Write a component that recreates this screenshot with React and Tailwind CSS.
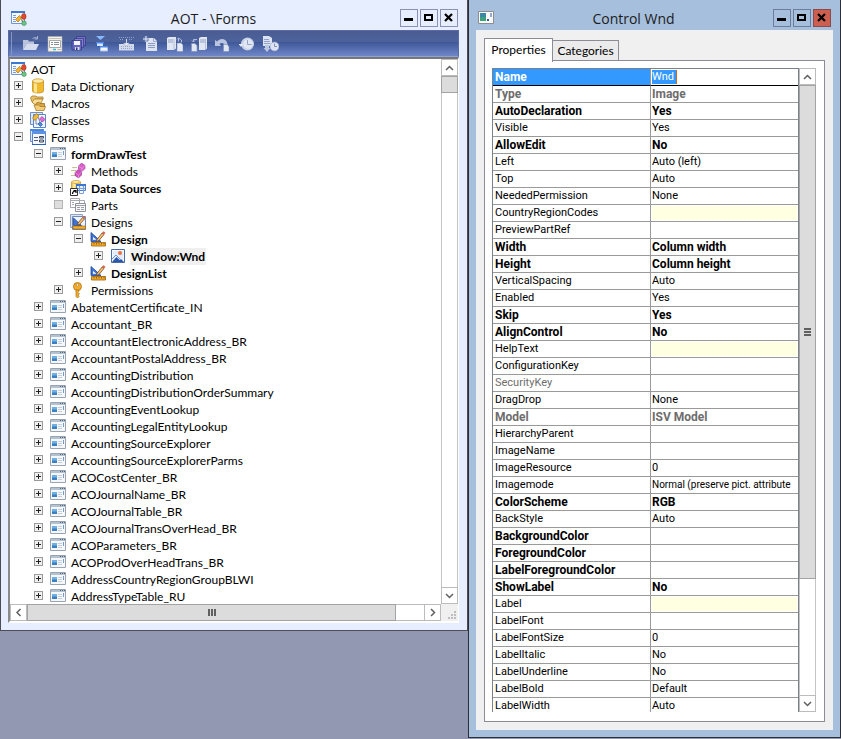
import clsx from 'clsx';

const treeRows = [
  { label: 'Data Dictionary', level: 0, icon: 'database', state: 'closed' },
  { label: 'Macros', level: 0, icon: 'macros', state: 'closed' },
  { label: 'Classes', level: 0, icon: 'classes', state: 'closed' },
  { label: 'Forms', level: 0, icon: 'forms', state: 'open' },
  { label: 'formDrawTest', level: 1, icon: 'form', state: 'open', bold: true },
  { label: 'Methods', level: 2, icon: 'methods', state: 'closed' },
  { label: 'Data Sources', level: 2, icon: 'sources', state: 'closed', bold: true },
  { label: 'Parts', level: 2, icon: 'parts', state: 'empty' },
  { label: 'Designs', level: 2, icon: 'designs', state: 'open' },
  { label: 'Design', level: 3, icon: 'design', state: 'open', bold: true },
  { label: 'Window:Wnd', level: 4, icon: 'image', state: 'closed', bold: true, selected: true },
  { label: 'DesignList', level: 3, icon: 'design', state: 'closed', bold: true },
  { label: 'Permissions', level: 2, icon: 'key', state: 'closed' },
  ...[
    'AbatementCertificate_IN',
    'Accountant_BR',
    'AccountantElectronicAddress_BR',
    'AccountantPostalAddress_BR',
    'AccountingDistribution',
    'AccountingDistributionOrderSummary',
    'AccountingEventLookup',
    'AccountingLegalEntityLookup',
    'AccountingSourceExplorer',
    'AccountingSourceExplorerParms',
    'ACOCostCenter_BR',
    'ACOJournalName_BR',
    'ACOJournalTable_BR',
    'ACOJournalTransOverHead_BR',
    'ACOParameters_BR',
    'ACOProdOverHeadTrans_BR',
    'AddressCountryRegionGroupBLWI',
    'AddressTypeTable_RU',
  ].map((label) => ({ label, level: 1, icon: 'form', state: 'closed' })),
];

const indents = ['pl-0', 'pl-5', 'pl-10', 'pl-15', 'pl-20'];

const properties = [
  { name: 'Type', value: 'Image', bold: true, muted: true },
  { name: 'AutoDeclaration', value: 'Yes', bold: true },
  { name: 'Visible', value: 'Yes' },
  { name: 'AllowEdit', value: 'No', bold: true },
  { name: 'Left', value: 'Auto (left)' },
  { name: 'Top', value: 'Auto' },
  { name: 'NeededPermission', value: 'None' },
  { name: 'CountryRegionCodes', value: '', yellow: true },
  { name: 'PreviewPartRef', value: '' },
  { name: 'Width', value: 'Column width', bold: true },
  { name: 'Height', value: 'Column height', bold: true },
  { name: 'VerticalSpacing', value: 'Auto' },
  { name: 'Enabled', value: 'Yes' },
  { name: 'Skip', value: 'Yes', bold: true },
  { name: 'AlignControl', value: 'No', bold: true },
  { name: 'HelpText', value: '', yellow: true },
  { name: 'ConfigurationKey', value: '' },
  { name: 'SecurityKey', value: '', muted: true },
  { name: 'DragDrop', value: 'None' },
  { name: 'Model', value: 'ISV Model', bold: true, muted: true },
  { name: 'HierarchyParent', value: '' },
  { name: 'ImageName', value: '' },
  { name: 'ImageResource', value: '0' },
  { name: 'Imagemode', value: 'Normal (preserve pict. attribute', long: true },
  { name: 'ColorScheme', value: 'RGB', bold: true },
  { name: 'BackStyle', value: 'Auto' },
  { name: 'BackgroundColor', value: '', bold: true },
  { name: 'ForegroundColor', value: '', bold: true },
  { name: 'LabelForegroundColor', value: '', bold: true },
  { name: 'ShowLabel', value: 'No', bold: true },
  { name: 'Label', value: '', yellow: true },
  { name: 'LabelFont', value: '' },
  { name: 'LabelFontSize', value: '0' },
  { name: 'LabelItalic', value: 'No' },
  { name: 'LabelUnderline', value: 'No' },
  { name: 'LabelBold', value: 'Default' },
  { name: 'LabelWidth', value: 'Auto' },
];

const Svg = ({ children }) => (
  <svg className="h-4 w-4 shrink-0" viewBox="0 0 16 16" fill="none" aria-hidden="true">
    {children}
  </svg>
);

const AotIcon = () => (
  <Svg>
    <path d="M.5 1.500h13v12H.5z" fill="#f4f8ff" stroke="#6f96d2" />
    <path d="M0 1h14v2H0z" fill="#3c78d0" />
    <path d="M2 5.500h3M2 7.500h3M2 9.500h2M2 11.500h3" stroke="#7f9ed0" />
    <path d="M9 7.500h2M10.500 9.500l1.500 3" stroke="#444" />
    <path d="m4.500 9.500 4-4 2 2.500-3.500 4z" fill="#f2b632" stroke="#a8700c" strokeWidth=".7" />
    <ellipse cx="12.800" cy="6.500" rx="2.300" ry="3" fill="#e0492c" stroke="#a02c18" strokeWidth=".5" />
    <circle cx="13" cy="13.200" r="2.300" fill="#6cc684" stroke="#2d7b44" strokeWidth=".5" />
  </Svg>
);

// Set square, pencil and ruler
const DraftingTools = () => (
  <>
    <path d="M1 1.500v9h10z" fill="#3f74d8" stroke="#1f4796" strokeWidth=".8" />
    <path d="M3 6v2.700h3.500z" fill="#fff" />
    <path d="m7 8.500 5-6.500 2 1.500-5 6-2.500 1.200z" fill="#f0c070" stroke="#6c3e14" strokeWidth=".7" />
    <path d="m12 2 1.300-1.700 2.200 1.500L14 3.500z" fill="#d95f48" />
    <path d="M1.500 11.500h14v3.500h-14z" fill="#f5ae2c" stroke="#9c5f08" strokeWidth=".8" />
    <path d="M4 12v1.500M6.500 12v1.500M9 12v1.500M11.500 12v1.500M14 12v1.500" stroke="#7c4a04" strokeWidth=".8" />
  </>
);

const treeIcons = {
  database: (
    <Svg>
      <path d="M2.500 3v10c0 1.300 2.500 2 5.500 2s5.500-.700 5.500-2V3z" fill="#f1b92c" stroke="#bb8414" strokeWidth=".7" />
      <path d="M4 4v10.300c1 .3 2 .4 3 .4V4z" fill="#fde58f" />
      <ellipse cx="8" cy="3" rx="5.500" ry="2.200" fill="#fdeaa6" stroke="#c8921e" strokeWidth=".7" />
    </Svg>
  ),
  macros: (
    <Svg>
      <path d="M.5 3 2 1h4l1 1h6v2H5L4 8 2 7z" fill="#e8c06a" stroke="#a87e2a" strokeWidth=".8" />
      <path d="M2 7l2.500-3H13l-2 4H8L6.500 10 4 9z" fill="#f8dc98" stroke="#a87e2a" strokeWidth=".8" />
      <path d="M6 13V8.500L8.500 7l1.500 1.500h4.500V14z" fill="#d9a440" stroke="#98701e" strokeWidth=".8" />
      <path d="M4 10h4.500L10 11.500h5.500l-1.500 4H6z" fill="#f2cd7c" stroke="#a87e2a" strokeWidth=".8" />
    </Svg>
  ),
  classes: (
    <Svg>
      <path d="M.5.500h12v12H.5z" fill="#dce8fb" stroke="#6c8fca" />
      <path d="M3.500 2.500h12v13h-12z" fill="#eef4ff" stroke="#5e84c4" />
      <path d="M8 5l2 5M6 7v5h2M10 12l2-3" stroke="#5571a5" strokeWidth=".8" />
      <path d="m2.500 6 4-4.500 2.500 2.500-4 4.500z" fill="#f4bb35" stroke="#aa740c" strokeWidth=".7" />
      <path d="m9.500 7 2.500-2.500 3 3L12.500 10z" fill="#e46bd7" stroke="#9b3492" strokeWidth=".7" />
      <path d="m8 12 2-2 2.500 2.500-2 2z" fill="#4d86dd" stroke="#2856a0" strokeWidth=".7" />
    </Svg>
  ),
  forms: (
    <Svg>
      <path d="M.5.500h13v12H.5z" fill="#dfeafb" stroke="#6b92d3" />
      <path d="M0 0h14v2H0z" fill="#4a86de" />
      <path d="M2.500 3.500h13v12h-13z" fill="#f4f8fe" stroke="#5a83c6" />
      <path d="M2 2h14v3H2z" fill="#5c92e2" />
      <path d="M4 8.500h4M4 11.500h4" stroke="#4b5b78" />
      <path d="M9.500 7.500h4v1.500h-4zM9.500 11h4v2h-4z" fill="#dfe7f5" stroke="#3b4658" />
      <path d="M2 15.500h14" stroke="#2f61b4" />
    </Svg>
  ),
  form: (
    <Svg>
      <path d="M.5 1.500h15v12H.5z" fill="#f5f7fa" stroke="#98a4b2" />
      <path d="M1 2h14v2H1z" fill="#b4c1cf" />
      <path d="M10 2.500h1M12 2.500h1M14 2.500h1" stroke="#4f6480" />
      <path d="M2 6h5v5H2z" fill="#6fb0e2" />
      <path d="M2 8.500h5V11H2z" fill="#3a7fc2" />
      <path d="M8 6.500h4M8 8.500h4M8 10.500h4" stroke="#c6ced8" />
      <path d="M13.500 5v4" stroke="#6f9ccd" />
    </Svg>
  ),
  methods: (
    <Svg>
      <path d="M2 4.500h5M1 7.500h5M1 12.500h4" stroke="#c9c48f" />
      <path d="m8.500 3 3-3 3.500 2.500v3L12 8.500 8.500 6z" fill="#db5fcb" stroke="#9c3390" strokeWidth=".6" />
      <path d="m8.500 3 3.500 2.500L15 2.700M12 5.500v3" stroke="#f6bdef" strokeWidth=".5" />
      <path d="m5 9.500 3-3 3.500 2.500v3l-3 3L5 12.500z" fill="#cf52bf" stroke="#8f2c84" strokeWidth=".6" />
      <path d="m5 9.500 3.500 2.500 3-2.800M8.500 12v3" stroke="#f6bdef" strokeWidth=".5" />
    </Svg>
  ),
  sources: (
    <Svg>
      <path d="M1.500 2v8h9V2z" fill="#f4cb58" stroke="#bb8d2a" strokeWidth=".7" />
      <path d="M3 3v6h2.500V3z" fill="#fdeaa6" />
      <ellipse cx="6" cy="2" rx="4.500" ry="1.500" fill="#fdeaa6" stroke="#c8921e" strokeWidth=".7" />
      <path d="M6.500 4.500h9v6h-9z" fill="#e6effc" stroke="#4d7ecb" />
      <path d="M6 4h10v2H6z" fill="#3f75d0" />
      <path d="M9.500 6v7.500h4V6M7 8.500h8" stroke="#7aa0dc" />
      <path d="M.5 8.500h7v7h-7z" fill="#fff" stroke="#333" />
      <path d="M2.500 14c0-2 1-3 3-3M3.500 10.500h2.500v2.500" stroke="#000" strokeWidth="1.200" />
    </Svg>
  ),
  parts: (
    <Svg>
      <path d="M.5 1.500h9v9h-9zM5.500 3.500h9v4" fill="#fff" stroke="#a6a9ae" />
      <path d="M1 3.500h8M2 5.500h2M2 7.500h2" stroke="#a6a9ae" />
      <path d="M5.500 6.500h10v8h-10z" fill="#f8f8f8" stroke="#8e9298" />
      <path d="M6 8.500h9M7 10.500h3M11 10.500h3M7 12.500h3M11 12.500h3" stroke="#9da1a7" />
    </Svg>
  ),
  designs: (
    <Svg>
      <path d="M.5.500h12v13H.5z" fill="#dbe5f4" stroke="#8fa4c4" />
      <path d="M2.500 2.500h13v13h-13z" fill="#eef3fb" stroke="#7189b0" />
      <path d="M3.500 4v7.500h8z" fill="#3f74d8" stroke="#1f4796" strokeWidth=".8" />
      <path d="m8 9 4.500-5.500 2 1.500-5 5.500-2 .5z" fill="#f0c070" stroke="#6c3e14" strokeWidth=".7" />
      <path d="m12.500 3.500 1-1.500 2 1.500-1 1.500z" fill="#d95f48" />
      <path d="M3 12h12.500v3H3z" fill="#f5ae2c" stroke="#9c5f08" strokeWidth=".6" />
    </Svg>
  ),
  design: (
    <Svg>
      <DraftingTools />
    </Svg>
  ),
  image: (
    <Svg>
      <path d="M1.500 1.500h13v13h-13z" fill="#f4f8ff" stroke="#4a6cab" />
      <path d="M3 3h10v10H3z" fill="#e2ecfc" />
      <path d="m2 14 4.500-5 3 3 1.500-1 3 3z" fill="#2c58aa" />
      <path d="m2 11 4-4 5 5" stroke="#6f93d3" />
      <circle cx="10" cy="5" r="2" fill="#ee7038" />
    </Svg>
  ),
  key: (
    <Svg>
      <circle cx="7.500" cy="4.500" r="4" fill="#f3ae2f" stroke="#ac6f0c" strokeWidth=".8" />
      <circle cx="7.500" cy="3" r="1.200" fill="#fff" stroke="#ac6f0c" strokeWidth=".6" />
      <path d="M6 8v6.500L7.500 16 9 14.500 8 13l1.500-1L8 10.500 9 9V8z" fill="#f3ae2f" stroke="#ac6f0c" strokeWidth=".7" />
    </Svg>
  ),
};

const toolbarButtons = [
  {
    label: 'Open',
    icon: (
      <>
        <path d="M0 14V4h5l1 1.500h5V8H3.500z" fill="#b9c3dc" />
        <path d="M3.500 8H16l-3 6H0z" fill="#d5dced" />
        <path d="M9.500 3c1.500-2 3-2 4.500-.5M14.500 0v3h-3" stroke="#aab7d6" />
      </>
    ),
  },
  {
    label: 'Properties',
    icon: (
      <>
        <path d="M1 .5h14v15H1z" fill="#f3f1ea" stroke="#aaa" strokeWidth=".6" />
        <path d="M2 2.500h12" stroke="#c6c3b9" />
        <path d="M2.500 4.500h11v7h-11z" fill="#fff" stroke="#a5a9ae" />
        <path d="M4 6.500h2M4 8.500h2M7 6.500h5M7 8.500h5" stroke="#888e99" />
        <path d="M6 13.500h3" stroke="#2fc3d8" strokeWidth="1.500" />
        <path d="M10.500 13.500H14" stroke="#bcb9b0" />
      </>
    ),
  },
  {
    label: 'Save all',
    icon: (
      <>
        <path d="M5.500.500h9v9h-9z" fill="#7071c6" stroke="#35357e" strokeWidth=".7" />
        <path d="M3.500 2.500h9v9h-9z" fill="#8080d0" stroke="#35357e" strokeWidth=".7" />
        <path d="M1 4.500h9.500V14H1z" fill="#6465c0" stroke="#35357e" strokeWidth=".7" />
        <path d="M3 5h6v4H3z" fill="#f2f3fc" />
        <path d="M4 11h4.500v3H4z" fill="#d9dbf2" />
        <path d="M5 11.500h1.500V14H5z" fill="#333378" />
      </>
    ),
  },
  {
    label: 'Import',
    icon: (
      <>
        <path d="M1 0h9L5.500 4z" fill="#86baff" />
        <path d="M1.500 6.500h7v4h-7z" fill="#d9e6fb" stroke="#2b61bf" />
        <path d="M1 6h8v1.500H1z" fill="#4b88ec" />
        <path d="M5.500 10.500h7v4.500h-7z" fill="#f1f5fd" stroke="#a9c4ee" />
        <path d="M5 10h8v1.500H5z" fill="#4d87e6" />
      </>
    ),
  },
  {
    label: 'Compile',
    icon: (
      <>
        <path d="M0 8h15v6.500H0z" fill="#d2d9eb" />
        <path d="M2 10.500h12M2 12.500h12" stroke="#98a6cb" strokeDasharray="1 1" />
        <path d="M0 1.500h15M1 3.500h4M10 3.500h4" stroke="#8fa0cc" strokeDasharray="1 1" />
        <path d="M7.500 3v4" stroke="#d6deef" />
        <path d="M4.500 7h6l-3 3z" fill="#fff" stroke="#7f90bd" strokeWidth=".6" />
      </>
    ),
  },
  {
    label: 'New',
    icon: (
      <>
        <path d="M3 2h8l3 3v10H3z" fill="#dde3f0" />
        <path d="M10.500 2v3.500H14" stroke="#9dabcd" />
        <path d="M5 7.500h7M5 9.500h7M5 11.500h7" stroke="#8b9ac3" />
        <path d="M3 0v6M0 3h6" stroke="#6478b2" strokeWidth="3" />
        <path d="M3 0v6M0 3h6" stroke="#e6ebf6" />
      </>
    ),
  },
  {
    label: 'Check in',
    icon: (
      <>
        <path d="M0 2 2 1h7v11.500L7 14H0z" fill="#e0e6f2" />
        <path d="M1 4h5M1 6h5" stroke="#93a2c8" />
        <path d="M7 3v11" stroke="#a9b6d5" strokeWidth=".8" />
        <path d="M11.500 5.500V2M10 3.500 11.500 2l3 2v2.500" stroke="#aebbdc" />
        <path d="M10 7h4l2 2v6.500h-6z" fill="#e6ebf5" stroke="#7f90bd" strokeWidth=".6" />
      </>
    ),
  },
  {
    label: 'Check out',
    icon: (
      <>
        <path d="M8 2l2-1h6v11.500L14 14H8z" fill="#e0e6f2" />
        <path d="M9 4h5M9 6h5" stroke="#93a2c8" />
        <path d="M14.500 3v11" stroke="#a9b6d5" strokeWidth=".8" />
        <path d="M6 3.500H2.500V6M1 4.500 2.500 6 4 4.500" stroke="#aebbdc" />
        <path d="M.5 7.500h3.500l2 2v6H.5z" fill="#e0e6f2" stroke="#7f90bd" strokeWidth=".6" />
      </>
    ),
  },
  {
    label: 'Undo',
    icon: (
      <>
        <path d="M0 4v6h6L4.500 8c2-2 4.500-1 5 1l.5 3h3l-.5-4C11.500 2 5 1.500 2 5.500z" fill="#b9c5df" />
        <path d="M8.500 8.500H12l2 2v5H8.500z" fill="#e0e6f2" stroke="#7f90bd" strokeWidth=".6" />
      </>
    ),
  },
  {
    label: 'History',
    icon: (
      <>
        <circle cx="8.500" cy="8" r="6.500" fill="#c8d2e7" />
        <path d="M-.5 8h5L2 11z" fill="#e3e9f4" />
        <circle cx="9" cy="8" r="4.800" fill="#e0e6f2" />
        <path d="M8.500 4v4.500h4" stroke="#93a2c8" />
      </>
    ),
  },
  {
    label: 'Schedule',
    icon: (
      <>
        <path d="M0 0h6l3 2v8H0z" fill="#dde3f0" />
        <path d="M1 3.500h5M1 5.500h6M1 7.500h6" stroke="#93a2c8" />
        <path d="M2 9v3H.5l3.500 4 3.500-4H6V9z" fill="#bcc7e0" />
        <circle cx="11.500" cy="10.500" r="4.500" fill="#dde3f0" stroke="#8f9fc8" strokeWidth=".6" />
        <path d="M11.500 7.500v3H14" stroke="#8092bf" />
      </>
    ),
  },
];

const WindowButtons = ({ redClose }) => (
  <div className="mt-[9px] flex gap-0.5 text-black">
    <button type="button" aria-label="Minimize" className={clsx('flex h-[18px] w-[18px] items-center justify-center border', redClose ? 'border-[#6d7d9a]' : 'border-[#8a91b4]')}>
      <svg className="h-4 w-4" viewBox="0 0 16 16" aria-hidden="true"><path d="M3 8h9v3H3z" fill="currentColor" /></svg>
    </button>
    <button type="button" aria-label="Maximize" className={clsx('flex h-[18px] w-[18px] items-center justify-center border', redClose ? 'border-[#6d7d9a]' : 'border-[#8a91b4]')}>
      <svg className="h-4 w-4" viewBox="0 0 16 16" aria-hidden="true"><path d="M4 5h7v5H4z" fill="none" stroke="currentColor" strokeWidth="2" /></svg>
    </button>
    <button type="button" aria-label="Close" className={clsx('flex h-[18px] w-[18px] items-center justify-center border', redClose ? 'border-[#8c4a4a] bg-[#cd5f50]' : 'border-[#8a91b4]')}>
      <svg className="h-4 w-4" viewBox="0 0 16 16" aria-hidden="true"><path d="m4 4 7 7M11 4l-7 7" fill="none" stroke="currentColor" strokeWidth="2.200" /></svg>
    </button>
  </div>
);

const arrows = {
  up: 'M4 10l3.500-3.500L11 10',
  down: 'M4 6l3.500 3.500L11 6',
  left: 'M9.500 4 6 7.500 9.500 11',
  right: 'M6 4l3.500 3.500L6 11',
};

const ScrollButton = ({ direction }) => (
  <button type="button" aria-label={`Scroll ${direction}`} className="block h-[17px] w-[17px] shrink-0 border border-[#bcbcbc] bg-white">
    <svg className="h-[15px] w-[15px]" viewBox="0 0 15 15" aria-hidden="true">
      <path d={arrows[direction]} fill="none" stroke="#606060" strokeWidth="1.500" />
    </svg>
  </button>
);

const Expander = ({ state, label }) => {
  if (state === 'empty') {
    return <span className="mt-[3px] ml-1 h-[9px] w-[9px] shrink-0 border border-[#b4b4b4] bg-[#dedede]" />;
  }
  return (
    <button type="button" aria-label={`Toggle ${label}`} className="mt-[3px] ml-1 h-[9px] w-[9px] shrink-0 border border-[#9a9a9a] bg-[#f0f0f0]">
      <svg className="h-[7px] w-[7px]" viewBox="0 0 7 7" aria-hidden="true">
        <path d={state === 'open' ? 'M1 3.500h5' : 'M1 3.500h5M3.500 1v5'} stroke="#222" />
      </svg>
    </button>
  );
};

const Tree = () => (
  <ul className="-mb-px min-w-0 overflow-hidden bg-white pt-0.5 font-['Lato',sans-serif] text-xs leading-[17px] whitespace-nowrap text-black">
    <li className="flex h-[17px] pl-px">
      <AotIcon />
      <span className="pl-1">AOT</span>
    </li>
    {treeRows.map((row) => (
      <li key={row.label} className={clsx('flex h-[17px]', indents[row.level])}>
        <span className="flex w-5 shrink-0">
          <Expander state={row.state} label={row.label} />
        </span>
        {treeIcons[row.icon]}
        <span className={clsx('ml-1 px-px', row.bold && 'font-bold', row.selected && 'bg-[#f0f0f0]')}>{row.label}</span>
      </li>
    ))}
  </ul>
);

const AotWindow = () => (
  <section className="min-w-0 flex-1 border-r border-b border-l border-[#4d4d55] bg-[#e6eeff] pr-2 pb-[7px] pl-[7px] font-['Open_Sans',sans-serif]">
    <header className="flex h-[30px] pr-px pl-[3px]">
      <span className="mt-[10px] flex">
        <AotIcon />
      </span>
      <h1 className="flex-1 pt-[9px] text-center text-sm leading-5 text-[#1c1c1c]">AOT - \Forms</h1>
      <WindowButtons />
    </header>
    <div className="flex h-[27px] items-center gap-2 border border-[#5a6ba6] border-b-[#8da0d8] bg-[linear-gradient(#4b5c92,#4d629c_42%,#3f5898_46%,#6f87c8)] pl-0.5">
      <span className="mr-[3px] h-[23px] w-px bg-[#8795c2]" />
      {toolbarButtons.map((button) => (
        <button key={button.label} type="button" aria-label={button.label} className="h-4 w-4">
          <Svg>{button.icon}</Svg>
        </button>
      ))}
    </div>
    <div className="grid grid-cols-[1fr_17px] border-t-2 border-r border-b-2 border-l-2 border-t-[#777] border-r-white border-b-white border-l-[#8a8a8a]">
      <Tree />
      <div className="flex flex-col border-x border-[#c4c4c4] bg-white">
        <div className="-mx-px">
          <ScrollButton direction="up" />
          <div className="h-[17px] border border-[#a3a3a3] bg-[#dcdcdc]" />
        </div>
        <div className="-mx-px mt-auto">
          <ScrollButton direction="down" />
        </div>
      </div>
      <div className="flex border-y border-[#bcbcbc] bg-white">
        <div className="-my-px flex flex-1">
          <ScrollButton direction="left" />
          <div className="flex-1">
            <div className="flex h-[17px] w-[93%] items-center justify-center gap-px border border-[#a3a3a3] bg-[#dcdcdc]">
              <span className="h-[7px] w-0.5 bg-[#606060]" />
              <span className="h-[7px] w-0.5 bg-[#606060]" />
              <span className="h-[7px] w-0.5 bg-[#606060]" />
            </div>
          </div>
          <ScrollButton direction="right" />
        </div>
      </div>
      <div className="bg-[#f0f0f0]">
        <svg className="h-[17px] w-[17px]" viewBox="0 0 17 17" aria-hidden="true">
          <path d="M13 7h2v2h-2zM10 10h2v2h-2zM13 10h2v2h-2zM7 13h2v2H7zM10 13h2v2h-2zM13 13h2v2h-2z" fill="#bdbdbd" />
        </svg>
      </div>
    </div>
  </section>
);

const PropertyTable = () => (
  <table className="w-full table-fixed border-separate border-spacing-0 text-[11px] leading-4 whitespace-nowrap text-black">
    <colgroup>
      <col className="w-[158px]" />
      <col />
    </colgroup>
    <tbody>
      <tr className="h-[17px]">
        <th scope="row" className="border-r border-b border-r-[#9a9a9a] border-b-black bg-[#3399ff] p-0 pl-0.5 text-left text-xs leading-4 font-bold text-white">
          <label htmlFor="control-name">Name</label>
        </th>
        <td className="border-b border-black p-0 pl-px">
          <input id="control-name" type="text" defaultValue="Wnd" className="block h-[14px] w-[25px] border-r border-[#c96a1b] bg-[#3399ff] text-[11px] leading-[14px] text-white outline-none" />
        </td>
      </tr>
      {properties.map((row) => (
        <tr key={row.name} className={clsx('h-[17px]', row.muted && 'text-[#6d6d6d]', row.bold && 'text-xs leading-4')}>
          <th scope="row" className={clsx('border-r border-b border-[#9a9a9a] p-0 pl-0.5 text-left', row.bold ? 'font-bold' : 'font-normal')}>
            {row.name}
          </th>
          <td className={clsx('border-b border-[#9a9a9a] p-0 pl-px', row.bold && 'font-bold', row.long && 'text-[10px]')}>
            {row.yellow ? <div className="mr-px h-[14px] bg-[#ffffe1]" /> : row.value}
          </td>
        </tr>
      ))}
    </tbody>
  </table>
);

const PropertiesWindow = () => (
  <section className="flex h-full w-[373px] shrink-0 flex-col border-r border-b border-l border-[#2e2e36] bg-[#a6bfdc] px-[7px] pb-[7px] font-['Open_Sans',sans-serif]">
    <header className="flex h-[30px] pr-0.5 pl-0.5">
      <svg className="mt-[11px] h-[13px] w-4" viewBox="0 0 16 13" fill="none" aria-hidden="true">
        <path d="M.5.500h15v12H.5z" fill="#fafafa" stroke="#8e8e8e" />
        <path d="M2 2h6v8H2z" fill="#3b87a8" />
        <path d="M2 6h6v4H2z" fill="#3aa27f" />
        <path d="M9 8h2v2H9z" fill="#2d5f9e" />
        <path d="M13 2v4" stroke="#2d5f9e" />
      </svg>
      <h2 className="flex-1 pt-[9px] text-center text-sm leading-5 text-[#1c1c1c]">Control Wnd</h2>
      <WindowButtons redClose />
    </header>
    <div className="flex min-h-0 flex-1 flex-col bg-[#f0f0f0] p-2">
      <div role="tablist" className="flex items-end font-['Lato',sans-serif] text-xs text-black">
        <button type="button" role="tab" aria-selected="true" className="relative z-10 -mb-0.5 h-6 w-[69px] border border-b-0 border-[#8b8c95] bg-white pb-0.5 leading-5">
          Properties
        </button>
        <button type="button" role="tab" aria-selected="false" className="h-5 w-[66px] border border-b-0 border-l-0 border-[#8b8c95] bg-[#ebebeb] leading-5">
          Categories
        </button>
      </div>
      <div role="tabpanel" className="flex min-h-0 flex-1 border border-[#8b8c95] bg-white pt-[7px] pr-2 pb-[9px] pl-[7px]">
        <div className="min-w-0 flex-1 overflow-hidden border-t border-r border-l border-[#7c808a] font-['Roboto',sans-serif]">
          <PropertyTable />
        </div>
        <div className="flex w-[17px] flex-col border-x border-[#c4c4c4] bg-white">
          <div className="-mx-px">
            <ScrollButton direction="up" />
          </div>
          <div className="-mx-px flex-1">
            <div className="flex h-[81%] flex-col items-center justify-center gap-px border border-[#a3a3a3] bg-[#dcdcdc]">
              <span className="h-0.5 w-[7px] bg-[#606060]" />
              <span className="h-0.5 w-[7px] bg-[#606060]" />
              <span className="h-0.5 w-[7px] bg-[#606060]" />
            </div>
          </div>
          <div className="-mx-px">
            <ScrollButton direction="down" />
          </div>
        </div>
      </div>
    </div>
  </section>
);

export default function App() {
  return (
    <main className="flex h-screen items-start overflow-hidden bg-[#9298b2] pb-px">
      <AotWindow />
      <PropertiesWindow />
    </main>
  );
}
